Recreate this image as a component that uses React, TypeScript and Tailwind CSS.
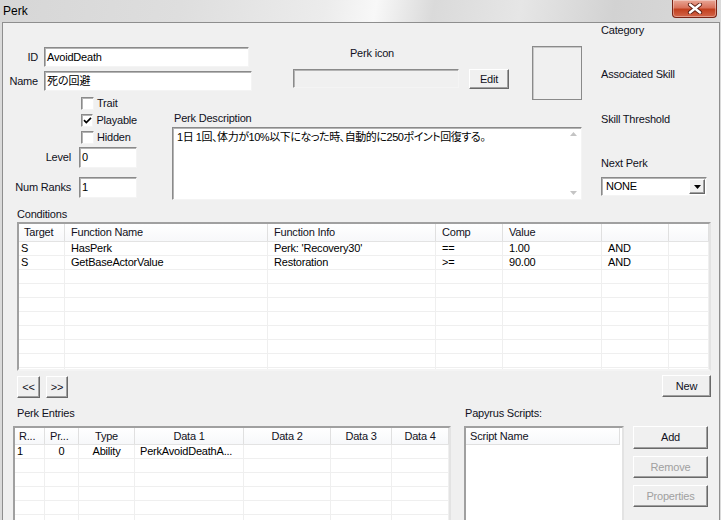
import * as React from 'react';

const font = "font-['Liberation_Sans',Arial,sans-serif]";
const jp = "font-['Liberation_Sans','Noto_Sans_CJK_JP',sans-serif] [font-feature-settings:'palt']";

const sunken =
  'border border-t-[#8a8a8a] border-l-[#8a8a8a] border-b-[#f4f4f4] border-r-[#f4f4f4] shadow-[inset_1px_1px_0_#b4b4b4]';

const raised =
  'border border-t-white border-l-white border-b-[#696969] border-r-[#696969] shadow-[inset_-1px_-1px_0_#a0a0a0] bg-[#f0f0f0]';

const Label: React.FC<{ children: React.ReactNode; className?: string }> = ({ children, className = '' }) => (
  <div className={`text-[11px] leading-[13px] tracking-[-0.2px] text-[#111122] whitespace-nowrap ${className}`}>{children}</div>
);

const Btn: React.FC<{ label: string; className?: string; disabled?: boolean }> = ({ label, className = '', disabled }) => (
  <div
    className={`${raised} shrink-0 flex items-center justify-center text-[11px] tracking-[-0.2px] ${
      disabled ? 'text-[#a0a0a0]' : 'text-[#111122]'
    } ${className}`}
  >
    {label}
  </div>
);

const Check: React.FC<{ label: string; checked?: boolean }> = ({ label, checked }) => (
  <div className="h-[17px] flex items-center">
    <div className={`w-[13px] h-[13px] bg-white ${sunken} flex items-center justify-center`}>
      {checked && (
        <svg width="9" height="9" viewBox="0 0 9 9">
          <path d="M1 4.2 L3.3 6.6 L8 1.8" fill="none" stroke="#000" strokeWidth="1.7" />
        </svg>
      )}
    </div>
    <Label className="ml-[3px]">{label}</Label>
  </div>
);

const condCols = [
  { w: 46, title: 'Target' },
  { w: 203, title: 'Function Name' },
  { w: 168, title: 'Function Info' },
  { w: 67, title: 'Comp' },
  { w: 99, title: 'Value' },
  { w: 67, title: '' },
  { w: 40, title: '' },
];

const condRows = [
  ['S', 'HasPerk', "Perk: 'Recovery30'", '==', '1.00', 'AND', ''],
  ['S', 'GetBaseActorValue', 'Restoration', '>=', '90.00', 'AND', ''],
];

const entryCols = [
  { w: 30, title: 'R...', align: 'left' },
  { w: 34, title: 'Pr...', align: 'left' },
  { w: 56, title: 'Type', align: 'center' },
  { w: 109, title: 'Data 1', align: 'center' },
  { w: 87, title: 'Data 2', align: 'center' },
  { w: 61, title: 'Data 3', align: 'center' },
  { w: 57, title: 'Data 4', align: 'center' },
];

const entryRow = [
  { text: '1', align: 'left' },
  { text: '0', align: 'center' },
  { text: 'Ability', align: 'center' },
  { text: 'PerkAvoidDeathA...', align: 'left' },
  { text: '', align: 'left' },
  { text: '', align: 'left' },
  { text: '', align: 'left' },
];

const listBox = 'bg-white overflow-hidden border-2 border-t-[#a0a0a0] border-l-[#a0a0a0] border-b-[#f4f4f4] border-r-[#e3e3e3]';
const headerBg = 'bg-[linear-gradient(#ffffff,#f7f8fa)]';

const ConditionsTable: React.FC = () => {
  const rows = [...condRows, ...Array.from({ length: 8 }, () => ['', '', '', '', '', '', ''])];
  return (
    <div className={`w-[694px] h-[149px] ${listBox}`}>
      <div className={`flex h-[18px] border-b border-[#e3e3e3] ${headerBg}`}>
        {condCols.map((c, i) => (
          <div
            key={i}
            style={{ width: c.w }}
            className={`shrink-0 flex items-center border-r border-[#e0e0e0] ${i === 0 ? 'pl-[5px]' : 'pl-[6px]'}`}
          >
            <Label>{c.title}</Label>
          </div>
        ))}
      </div>
      {rows.map((r, ri) => (
        <div key={ri} className="flex h-[14px] border-b border-[#efefef]">
          {r.map((cell, ci) => (
            <div
              key={ci}
              style={{ width: condCols[ci].w }}
              className={`shrink-0 flex items-center border-r border-[#efefef] ${ci === 0 ? 'pl-[2px]' : 'pl-[6px]'}`}
            >
              <Label className="text-black">{cell}</Label>
            </div>
          ))}
        </div>
      ))}
    </div>
  );
};

const EntriesTable: React.FC = () => {
  const empty = Array.from({ length: 6 }, (_, i) => i);
  return (
    <div className={`w-[438px] h-[110px] ${listBox}`}>
      <div className={`flex h-[17px] border-b border-[#e3e3e3] ${headerBg}`}>
        {entryCols.map((c, i) => (
          <div
            key={i}
            style={{ width: c.w }}
            className={`shrink-0 flex items-center border-r border-[#e0e0e0] ${
              c.align === 'center' ? 'justify-center' : i === 0 ? 'pl-[4px]' : 'pl-[5px]'
            }`}
          >
            <Label>{c.title}</Label>
          </div>
        ))}
      </div>
      <div className="flex h-[14px] border-b border-[#efefef]">
        {entryRow.map((cell, ci) => (
          <div
            key={ci}
            style={{ width: entryCols[ci].w }}
            className={`shrink-0 flex items-center border-r border-[#efefef] ${
              cell.align === 'center' ? 'justify-center' : ci === 0 ? 'pl-[2px]' : 'pl-[5px]'
            }`}
          >
            <Label className="text-black">{cell.text}</Label>
          </div>
        ))}
      </div>
      {empty.map(i => (
        <div key={i} className="flex h-[14px] border-b border-[#efefef]">
          {entryCols.map((c, ci) => (
            <div key={ci} style={{ width: c.w }} className="shrink-0 border-r border-[#efefef]" />
          ))}
        </div>
      ))}
    </div>
  );
};

const TitleBar: React.FC = () => (
  <div className="h-[22px] shrink-0 flex items-center relative bg-[linear-gradient(100deg,#d6d6d6_0%,#dedede_25%,#ececec_45%,#f8f8f8_52%,#dadada_60%,#e6e6e6_72%,#d2d2d2_85%,#dadada_100%)]">
    <div className="ml-[3px] mt-[-1px] text-[12px] text-black">Perk</div>
    <div className="absolute left-[672px] top-0 w-[45px] h-[18px] rounded-b-[4px] border border-t-0 border-[#7a2416] bg-[linear-gradient(#e9a796_0%,#d9735c_45%,#c2401f_55%,#d3664a_100%)] flex items-center justify-center shadow-[inset_0_0_0_1px_rgba(255,255,255,0.35)]">
      <svg width="16" height="11" viewBox="0 0 16 11">
        <path d="M3 1.5 L13 9.5 M13 1.5 L3 9.5" stroke="#5a1d12" strokeWidth="4.2" strokeLinecap="round" />
        <path d="M3 1.5 L13 9.5 M13 1.5 L3 9.5" stroke="#ffffff" strokeWidth="2.4" strokeLinecap="round" />
      </svg>
    </div>
  </div>
);

export default function App() {
  return (
    <div className={`w-[721px] h-[520px] overflow-hidden bg-[#dadada] flex flex-col ${font}`}>
      <TitleBar />
      <div className="flex-1 min-h-0 overflow-hidden ml-[2px] mr-[1px] border-l border-r border-t border-[#8e8e8e] bg-[#f0f0f0] flex flex-col">
        {/* top area */}
        <div className="h-[185px] flex shrink-0">
          <div className="w-[598px] shrink-0 flex flex-col">
            <div className="mt-[23px] h-[49px] shrink-0 flex items-start">
              <div className="w-[249px] shrink-0 flex flex-col">
                <div className="mt-[1px] h-[20px] flex items-center">
                  <Label className="w-[35px] text-right">ID</Label>
                  <div className={`ml-[6px] w-[205px] h-[20px] bg-white ${sunken} flex items-center pl-[2px]`}>
                    <Label className="text-black">AvoidDeath</Label>
                  </div>
                </div>
                <div className="mt-[4px] h-[20px] flex items-center">
                  <Label className="w-[35px] text-right">Name</Label>
                  <div className={`ml-[6px] w-[208px] h-[20px] bg-white ${sunken} flex items-center pl-[2px]`}>
                    <div className={`text-[11px] leading-[13px] text-black ${jp}`}>死の回避</div>
                  </div>
                </div>
              </div>
              <div className="ml-[41px] flex flex-col">
                <Label className="mt-[1px] w-[158px] text-center">Perk icon</Label>
                <div className="mt-[9px] flex items-start">
                  <div className={`w-[166px] h-[19px] bg-[#f0f0f0] ${sunken}`} />
                  <Btn label="Edit" className="ml-[10px] w-[40px] h-[20px]" />
                </div>
              </div>
              <div className="ml-[23px] w-[50px] h-[54px] shrink-0 border border-[#8a8a8a] shadow-[inset_1px_1px_0_#c8c8c8]" />
            </div>
            <div className="flex items-start">
              <div className="w-[134px] shrink-0 flex flex-col">
                <div className="ml-[78px] flex flex-col">
                  <Check label="Trait" />
                  <Check label="Playable" checked />
                  <Check label="Hidden" />
                </div>
                <div className="mt-[1px] flex items-center">
                  <Label className="w-[68px] text-right">Level</Label>
                  <div className={`ml-[8px] w-[58px] h-[21px] bg-white ${sunken} flex items-center pl-[2px]`}>
                    <Label className="text-black">0</Label>
                  </div>
                </div>
                <div className="mt-[9px] flex items-center">
                  <Label className="w-[68px] text-right">Num Ranks</Label>
                  <div className={`ml-[8px] w-[58px] h-[21px] bg-white ${sunken} flex items-center pl-[2px]`}>
                    <Label className="text-black">1</Label>
                  </div>
                </div>
              </div>
              <div className="ml-[35px] mt-[17px] flex flex-col">
                <Label className="pl-[2px]">Perk Description</Label>
                <div className={`mt-[2px] w-[410px] h-[73px] bg-white ${sunken} flex`}>
                  <div className={`flex-1 pl-[4px] pt-[2px] text-[11px] leading-[14px] tracking-[-0.45px] text-black ${jp}`}>
                    1日 1回、体力が10%以下になった時、自動的に250ポイント回復する。
                  </div>
                  <div className="w-[16px] flex flex-col items-center justify-between py-[4px]">
                    <svg width="7" height="4" viewBox="0 0 7 4">
                      <path d="M0 4 L3.5 0 L7 4 Z" fill="#c4c4c4" />
                    </svg>
                    <svg width="7" height="4" viewBox="0 0 7 4">
                      <path d="M0 0 L3.5 4 L7 0 Z" fill="#c4c4c4" />
                    </svg>
                  </div>
                </div>
              </div>
            </div>
          </div>
          <div className="w-[106px] shrink-0 flex flex-col">
            <Label className="mt-[1px]">Category</Label>
            <Label className="mt-[31px]">Associated Skill</Label>
            <Label className="mt-[32px]">Skill Threshold</Label>
            <Label className="mt-[31px]">Next Perk</Label>
            <div className={`mt-[7px] w-[106px] h-[19px] bg-white ${sunken} flex items-center`}>
              <Label className="flex-1 pl-[4px] text-black">NONE</Label>
              <div className={`${raised} w-[16px] h-[15px] mr-[1px] flex items-center justify-center`}>
                <svg width="7" height="4" viewBox="0 0 7 4">
                  <path d="M0 0 L3.5 4 L7 0 Z" fill="#000" />
                </svg>
              </div>
            </div>
          </div>
        </div>

        {/* conditions */}
        <Label className="ml-[14px] shrink-0">Conditions</Label>
        <div className="ml-[14px] mt-[1px] shrink-0">
          <ConditionsTable />
        </div>
        <div className="ml-[14px] mt-[4px] w-[694px] shrink-0 flex items-start">
          <Btn label="<<" className="mt-[1px] w-[23px] h-[22px]" />
          <Btn label=">>" className="mt-[1px] ml-[6px] w-[22px] h-[22px]" />
          <Btn label="New" className="ml-auto w-[49px] h-[22px]" />
        </div>

        {/* bottom */}
        <div className="mt-[9px] shrink-0 flex items-start">
          <div className="ml-[10px] flex flex-col">
            <Label className="pl-[4px]">Perk Entries</Label>
            <div className="mt-[6px]">
              <EntriesTable />
            </div>
          </div>
          <div className="ml-[13px] flex flex-col">
            <Label className="pl-[1px]">Papyrus Scripts:</Label>
            <div className={`mt-[6px] w-[160px] h-[110px] ${listBox}`}>
              <div className={`h-[17px] w-[154px] flex items-center pl-[4px] border-b border-r border-[#e0e0e0] ${headerBg}`}>
                <Label>Script Name</Label>
              </div>
            </div>
          </div>
          <div className="ml-[9px] mt-[19px] flex flex-col">
            <Btn label="Add" className="w-[75px] h-[23px]" />
            <Btn label="Remove" disabled className="mt-[7px] w-[75px] h-[22px]" />
            <Btn label="Properties" disabled className="mt-[7px] w-[75px] h-[22px]" />
          </div>
        </div>
      </div>
    </div>
  );
}
